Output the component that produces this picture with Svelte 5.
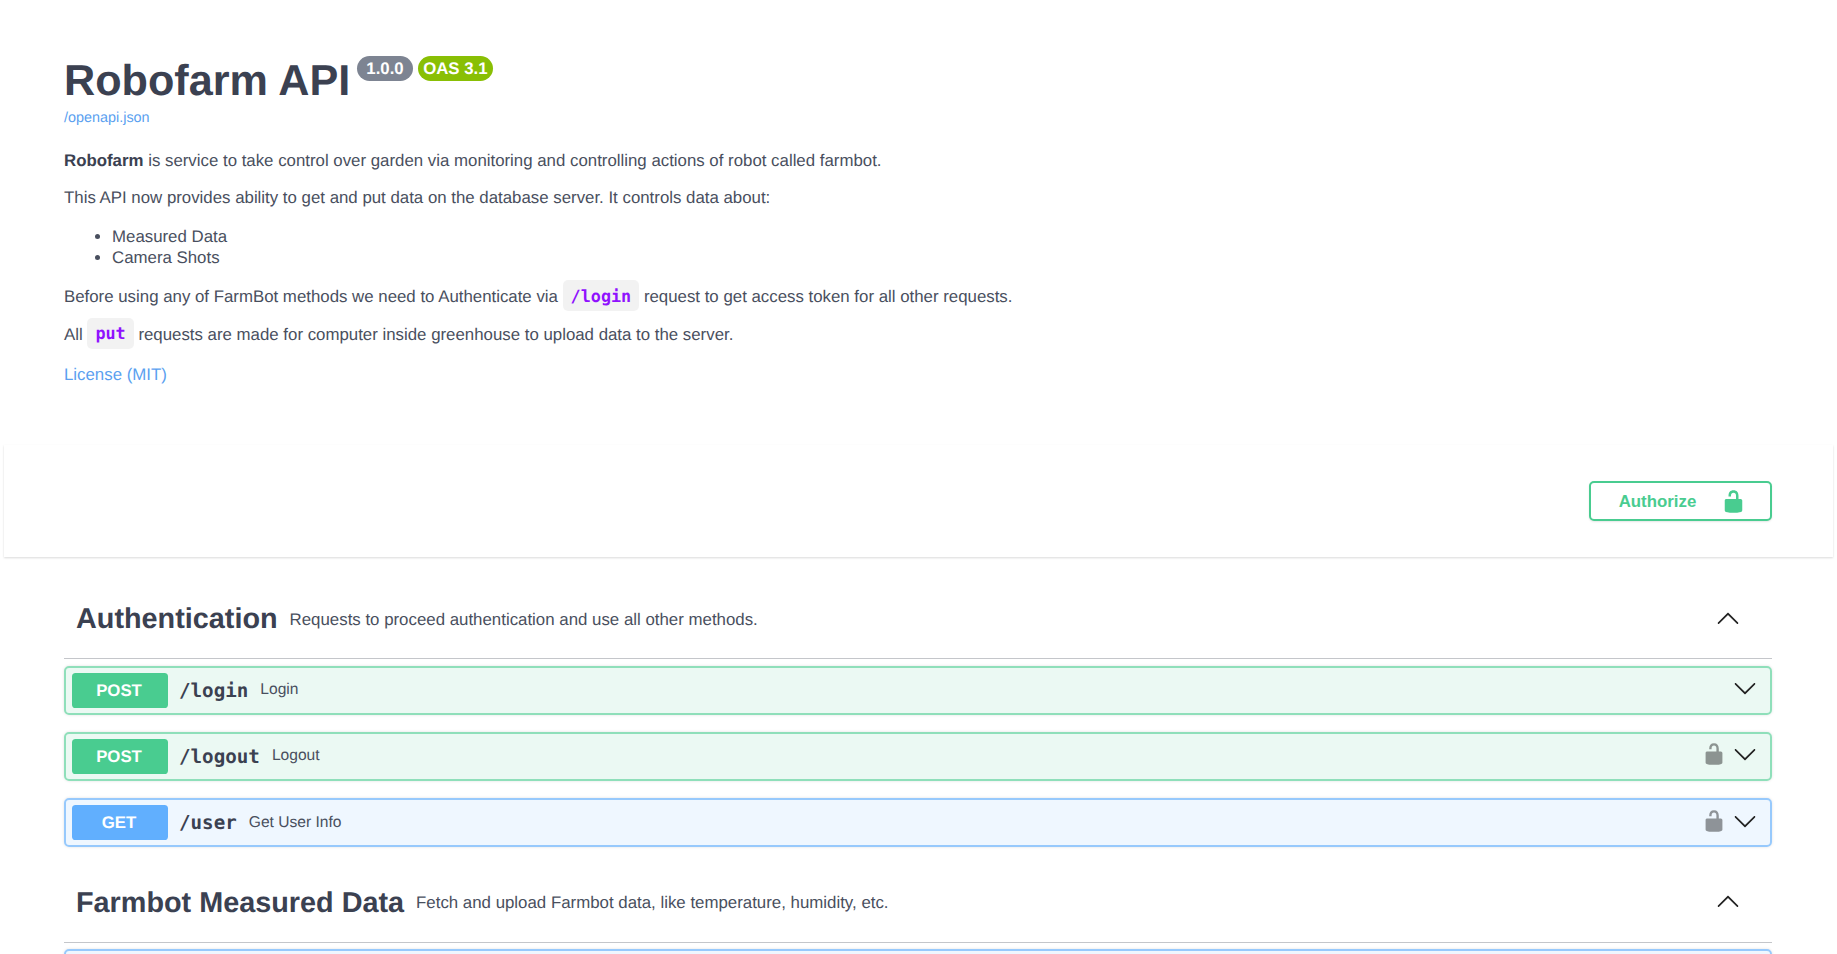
<script>
	const lockPath =
		'M15.8 8H14V5.6C14 2.703 12.665 1 10 1 7.334 1 6 2.703 6 5.6V6h2v-.801C8 3.754 8.797 3 10 3c1.203 0 2 .754 2 2.199V8H4c-.553 0-1 .646-1 1.199V17c0 .549.428 1.139.951 1.307l1.197.387C5.672 18.861 6.55 19 7.1 19h5.8c.549 0 1.428-.139 1.951-.307l1.196-.387c.524-.167.953-.757.953-1.306V9.199C17 8.646 16.352 8 15.8 8z';
	const downPath =
		'M17.418 6.109c.272-.268.709-.268.979 0s.271.701 0 .969l-7.908 7.83c-.27.268-.707.268-.979 0l-7.908-7.83c-.27-.268-.27-.701 0-.969.271-.268.709-.268.979 0L10 13.25l7.418-7.141z';
	const upPath =
		'M2.582 13.891c-.272.268-.709.268-.979 0s-.271-.701 0-.969l7.908-7.83c.27-.268.707-.268.979 0l7.908 7.83c.27.268.27.701 0 .969-.271.268-.709.268-.979 0L10 6.75l-7.418 7.141z';

	const tags = [
		{
			name: 'Authentication',
			desc: 'Requests to proceed authentication and use all other methods.',
			ops: [
				{ method: 'POST', path: '/login', summary: 'Login', locked: false },
				{ method: 'POST', path: '/logout', summary: 'Logout', locked: true },
				{ method: 'GET', path: '/user', summary: 'Get User Info', locked: true }
			]
		},
		{
			name: 'Farmbot Measured Data',
			desc: 'Fetch and upload Farmbot data, like temperature, humidity, etc.',
			ops: [],
			cutOff: true
		}
	];
</script>

<div class="page">
	<section class="wrapper info">
		<hgroup>
			<h2 class="title">
				Robofarm API<span class="pill grey">1.0.0</span><span class="pill green">OAS 3.1</span>
			</h2>
			<a class="spec" href="#spec">/openapi.json</a>
		</hgroup>
		<div class="description">
			<p><strong>Robofarm</strong> is service to take control over garden via monitoring and controlling actions of robot called farmbot.</p>
			<p>This API now provides ability to get and put data on the database server. It controls data about:</p>
			<ul>
				<li>Measured Data</li>
				<li>Camera Shots</li>
			</ul>
			<p>Before using any of FarmBot methods we need to Authenticate via <code>/login</code> request to get access token for all other requests.</p>
			<p>All <code>put</code> requests are made for computer inside greenhouse to upload data to the server.</p>
		</div>
		<a class="license" href="#license">License (MIT)</a>
	</section>

	<section class="scheme">
		<div class="wrapper scheme-inner">
			<button class="authorize">
				<span>Authorize</span>
				<svg viewBox="0 0 20 20" width="25" height="25"><path d={lockPath} /></svg>
			</button>
		</div>
	</section>

	<section class="wrapper tags">
		{#each tags as tag}
			<div class="tag">
				<h3 class="tag-head">
					<span class="tag-name">{tag.name}</span>
					<small>{tag.desc}</small>
					<svg class="arrow tag-arrow" viewBox="0 0 20 20" width="24" height="24"><path d={upPath} /></svg>
				</h3>
				{#each tag.ops as op}
					<div class="op" class:post={op.method === 'POST'} class:get={op.method === 'GET'}>
						<span class="method">{op.method}</span>
						<span class="path">{op.path}</span>
						<span class="summary">{op.summary}</span>
						{#if op.locked}
							<svg class="lock" viewBox="0 0 20 20" width="24" height="24"><path d={lockPath} /></svg>
						{/if}
						<svg class="arrow" viewBox="0 0 20 20" width="24" height="24"><path d={downPath} /></svg>
					</div>
				{/each}
				{#if tag.cutOff}
					<div class="op get"></div>
				{/if}
			</div>
		{/each}
	</section>
</div>

<style>
	:global(body) {
		background: #fff;
		overflow: hidden;
	}

	.page {
		height: 954px;
		overflow: hidden;
		font-family: 'Liberation Sans', Arial, sans-serif;
		color: #3b4151;
		text-rendering: geometricPrecision;
	}

	.wrapper {
		margin: 0 0 0 64px;
		width: 1708px;
	}

	.info {
		padding-top: 57px;
		height: 385px;
		box-sizing: border-box;
	}

	hgroup {
		margin: 0;
	}

	.title {
		margin: 0;
		font-size: 43.2px;
		line-height: 1.15;
		font-weight: 700;
	}

	.pill {
		position: relative;
		top: -6px;
		display: inline-block;
		vertical-align: super;
		margin-left: 7px;
		border-radius: 68px;
		padding: 2.5px 6px;
		font-size: 16.8px;
		line-height: 20px;
		color: #fff;
	}

	.grey {
		background: #7d8492;
		padding: 2.5px 9px;
		font-weight: 700;
	}

	.green {
		background: #89bf04;
		margin-left: 5px;
		padding: 2.5px 5.5px;
	}

	.spec {
		display: block;
		margin-top: 3px;
		font-size: 14.4px;
		color: #5a9ff0;
		text-decoration: none;
	}

	.description {
		margin-top: 25.5px;
		font-size: 16.83px;
		line-height: 20px;
		color: #494f5e;
	}

	.description strong {
		color: #3b4151;
	}

	.description p {
		margin: 0 0 17px;
	}

	ul {
		margin: 18px 0 18px;
		padding-left: 48px;
		line-height: 21px;
	}

	code {
		display: inline-block;
		padding: 5.5px 8px;
		margin: -6px 0;
		border-radius: 5px;
		background: rgba(0, 0, 0, 0.05);
		color: #9012fe;
		font-family: 'DejaVu Sans Mono', monospace;
		font-size: 16.8px;
		font-weight: 600;
		line-height: 20px;
	}

	.license {
		display: block;
		margin-top: 20.5px;
		font-size: 16.83px;
		color: #5a9ff0;
		text-decoration: none;
	}

	.scheme {
		margin: 60px 4px 0;
		height: 112px;
		box-sizing: border-box;
		background: #fff;
		box-shadow: 0 1px 2px 0 rgba(0, 0, 0, 0.15);
	}

	.scheme-inner {
		display: flex;
		justify-content: flex-end;
		align-items: center;
		margin-left: 60px;
		height: 100%;
	}

	.authorize {
		display: flex;
		align-items: center;
		justify-content: center;
		gap: 25px;
		width: 183px;
		height: 40px;
		background: #fff;
		border: 2.4px solid #49cc90;
		border-radius: 5px;
		box-shadow: 0 1px 2px rgba(0, 0, 0, 0.1);
		color: #49cc90;
		font-family: inherit;
		font-size: 16.85px;
		font-weight: 700;
		padding: 1px 0 0 4px;
	}

	.authorize svg {
		fill: #49cc90;
	}

	.tags {
		padding-top: 24px;
	}

	.tag + .tag {
		margin-top: 0.8px;
	}

	.tag-head {
		display: flex;
		align-items: center;
		height: 77px;
		margin: 0 0 6.5px;
		padding: 0 12px;
		border-bottom: 1.2px solid rgba(59, 65, 81, 0.3);
		font-weight: 400;
	}

	.tag-name {
		font-size: 28.8px;
		font-weight: 700;
	}

	small {
		margin-left: 12px;
		font-size: 16.85px;
		color: #494f5e;
	}

	.tag-arrow {
		margin-left: auto;
		margin-right: 20px;
		position: relative;
		top: -1px;
	}

	.op {
		display: flex;
		align-items: center;
		height: 49px;
		box-sizing: border-box;
		margin-bottom: 17.4px;
		padding: 0 5.5px;
		border: 2px solid;
		border-radius: 5px;
		box-shadow: 0 0 3px rgba(0, 0, 0, 0.12);
	}

	.post {
		background: rgba(73, 204, 144, 0.11);
		border-color: #8fdfba;
	}

	.get {
		background: rgba(97, 175, 254, 0.1);
		border-color: #97c9fc;
	}

	.method {
		flex: none;
		width: 96px;
		height: 35px;
		box-sizing: border-box;
		padding-right: 1px;
		line-height: 35px;
		text-align: center;
		border-radius: 3.6px;
		color: #fff;
		font-size: 16.8px;
		font-weight: 700;
	}

	.post .method {
		background: #49cc90;
	}

	.get .method {
		background: #61affe;
	}

	.path {
		margin-left: 11.5px;
		font-family: 'DejaVu Sans Mono', monospace;
		font-size: 19.2px;
		font-weight: 600;
	}

	.summary {
		margin-left: 12px;
		font-size: 15.6px;
		color: #494f5e;
	}

	.lock {
		margin-left: auto;
		opacity: 0.4;
		position: relative;
		top: -2px;
	}

	.arrow {
		flex: none;
	}

	.op .arrow {
		margin-left: 7px;
		margin-right: 8px;
		position: relative;
		top: -2px;
	}

	.op > .summary + .arrow {
		margin-left: auto;
	}

	.arrow path {
		fill: #222;
	}
</style>
